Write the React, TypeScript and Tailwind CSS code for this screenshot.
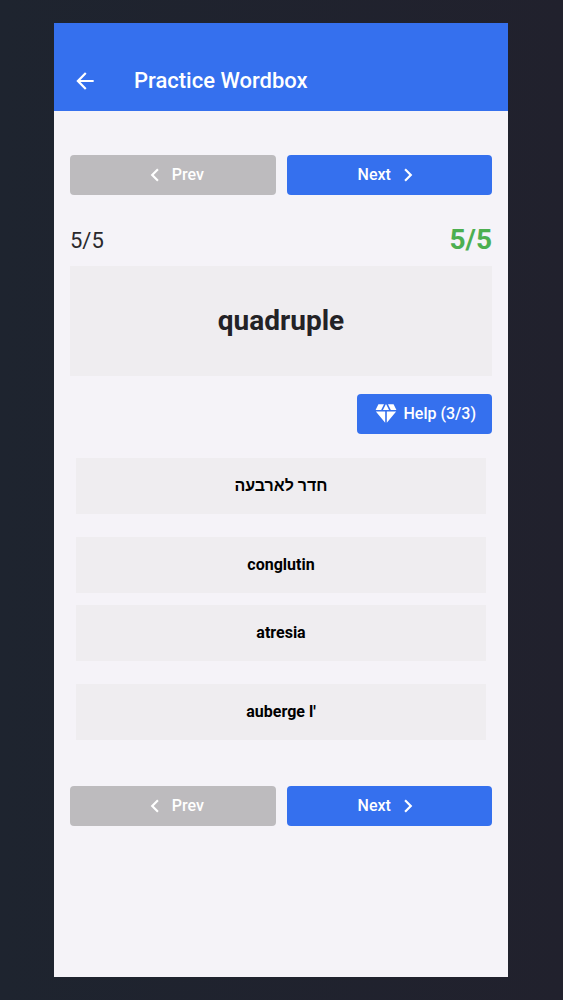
import { MdArrowBack, MdChevronLeft, MdChevronRight, MdDiamond } from 'react-icons/md'

const answerGroups = [
  ['חדר לארבעה', 'conglutin'],
  ['atresia', "auberge l'"],
]

function PrevNext() {
  return (
    <div className="flex gap-[11px]">
      <button className="flex h-10 flex-1 items-center justify-center gap-1 rounded bg-[#bdbbbe] font-medium text-white">
        <MdChevronLeft size={26} />
        Prev
      </button>
      <button className="flex h-10 flex-1 items-center justify-center gap-1 rounded bg-[#3570ee] font-medium text-white">
        Next
        <MdChevronRight size={26} />
      </button>
    </div>
  )
}

export default function App() {
  return (
    <div className="flex min-h-screen flex-col bg-linear-to-r from-[#1e242f] to-[#21212d] pt-[23px] pr-[55px] pb-[23px] pl-[54px] font-['Roboto','Noto_Sans',sans-serif] text-base">
      <div className="flex flex-1 flex-col bg-[#f5f3f8]">
        <header className="flex items-center gap-9 bg-[#3570ee] px-[18px] pt-[42px] pb-3.5 text-white">
          <button aria-label="Back">
            <MdArrowBack size={26} />
          </button>
          <h1 className="text-[22px] leading-8 font-medium">Practice Wordbox</h1>
        </header>

        <main className="px-4 pt-11">
          <PrevNext />

          <div className="mt-[27px] flex h-9 items-center justify-between">
            <span className="text-[22px] text-[#29282c]">5/5</span>
            <span className="text-[28px] font-bold text-[#4caf50]">5/5</span>
          </div>

          <div className="mt-2 flex h-[110px] items-center justify-center bg-[#efedf0]">
            <h2 className="text-[28px] font-bold text-[#232226]">quadruple</h2>
          </div>

          <div className="mt-[18px] flex justify-end">
            <button className="flex h-10 items-center gap-1 rounded bg-[#3570ee] px-4 font-medium text-white">
              <MdDiamond size={26} />
              Help (3/3)
            </button>
          </div>

          <div className="mt-6 mb-[46px] flex flex-col gap-3 px-1.5">
            {answerGroups.map((group) => (
              <div key={group[0]} className="flex flex-col gap-[23px]">
                {group.map((answer) => (
                  <button key={answer} className="h-14 bg-[#efedf0] font-bold text-black">
                    {answer}
                  </button>
                ))}
              </div>
            ))}
          </div>

          <PrevNext />
        </main>
      </div>
    </div>
  )
}
